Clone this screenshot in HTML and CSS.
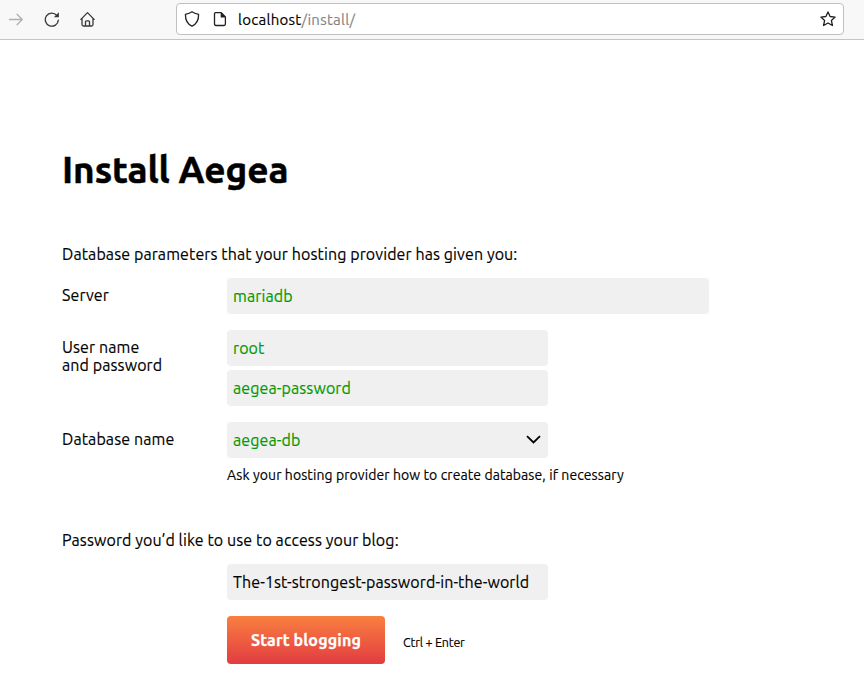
FILE: index.html
```html
<!DOCTYPE html>
<html lang="en">
<head>
<meta charset="utf-8">
<title>Install Aegea</title>
<link rel="stylesheet" href="styles.css">
</head>
<body>
<header class="toolbar">
  <nav class="nav">
    <svg class="icon forward" viewBox="0 0 16 16"><path d="M1.500 8.500h12.700M9 3.200l5.300 5.300L9 13.800"/></svg>
    <svg class="icon" viewBox="0 0 16 16"><path d="M14.300 9.100A6.500 6.500 0 1 1 12.800 4.500"/><path class="solid" d="M14.900 1.300v5H9.900z"/></svg>
    <svg class="icon" viewBox="0 0 16 16"><path d="M.9 8.400 7.500 1.600l6.600 6.800M2 7.300v6.200q0 1.500 1.500 1.500h8q1.500 0 1.500-1.500V7.300M5.500 14.800v-4q0-1 1-1h2q1 0 1 1v4"/></svg>
  </nav>
  <div class="address">
    <svg class="icon" viewBox="0 0 16 16"><path d="M8 .8c2 1.400 4 2 6.600 2.500C14.700 9 12.500 13.200 8 15.200 3.500 13.200 1.300 9 1.400 3.300 4 2.800 6 2.200 8 .8z"/></svg>
    <svg class="icon page" viewBox="0 0 16 16"><path d="M3.500 1.700h5.700l4.200 4.200v7.200q0 1.400-1.400 1.400H3.900q-1.400 0-1.400-1.400V2.700q0-1 1-1z"/><path class="fold" d="M8.700 1.700h.7l4 4v.7H8.700z"/></svg>
    <div class="url"><span class="host">localhost</span>/install/</div>
    <svg class="icon star" viewBox="0 0 16 16"><path d="m8 .9 2.100 4.600 5 .6-3.700 3.400 1 5L8 12l-4.400 2.500 1-5L.9 6.100l5-.6z"/></svg>
  </div>
</header>
<main class="page-body">
  <h1 class="title">Install Aegea</h1>
  <form class="form">
    <p class="lead">Database parameters that your hosting provider has given you:</p>
    <div class="row">
      <label class="label">Server</label>
      <div class="controls"><input class="field wide" value="mariadb"></div>
    </div>
    <div class="row">
      <label class="label">User name<br>and password</label>
      <div class="controls"><input class="field" value="root"><input class="field" value="aegea-password"></div>
    </div>
    <div class="row">
      <label class="label">Database name</label>
      <div class="controls">
        <div class="field select"><span>aegea-db</span><svg class="chevron" viewBox="0 0 15 10"><path d="m1 1.200 6.500 6.300L14 1.200"/></svg></div>
        <p class="hint">Ask your hosting provider how to create database, if necessary</p>
      </div>
    </div>
    <p class="lead lead-pass">Password you’d like to use to access your blog:</p>
    <div class="row">
      <span class="label"></span>
      <div class="controls"><input class="field strong" value="The-1st-strongest-password-in-the-world"></div>
    </div>
    <div class="row">
      <span class="label"></span>
      <div class="submit"><button class="button" type="button">Start blogging</button><span class="shortcut">Ctrl + Enter</span></div>
    </div>
  </form>
</main>
</body>
</html>
```
FILE: styles.css
```css
* { box-sizing: border-box; }
body {
  margin: 0;
  height: 691px;
  overflow: hidden;
  background: #fff;
  color: #000;
  font: 16px/18px Ubuntu, "Noto Sans", sans-serif;
  letter-spacing: .1px;
  -webkit-text-stroke: .15px;
}
p, h1 { margin: 0; white-space: nowrap; }

.toolbar {
  display: flex;
  height: 40px;
  padding: 3px 20px 4px 8px;
  background: #f8f8f8;
  border-bottom: 1px solid #c4c4c4;
}
.nav { display: flex; align-items: center; gap: 20px; width: 168px; }
.icon {
  flex: none;
  width: 16px;
  height: 16px;
  fill: none;
  stroke: #38383b;
  stroke-width: 1.3;
  stroke-linecap: round;
  stroke-linejoin: round;
}
.forward { stroke: #b0b0b0; }
.solid { fill: #38383b; stroke: none; }
.fold { fill: #202024; stroke: none; }
.address {
  display: flex;
  align-items: center;
  flex: 1;
  height: 32px;
  padding: 0 7px;
  background: #fff;
  border: 1px solid #c0c0c0;
  border-radius: 4px;
}
.address .icon { stroke: #202024; }
.address .fold { stroke: none; }
.page { margin-left: 12px; }
.url { flex: 1; margin-left: 10px; padding-top: 1px; color: #858585; font-size: 15px; letter-spacing: .28px; }
.host { color: #000; }

.page-body { padding: 108px 0 0 62px; }
.title { font-size: 37px; line-height: 44px; font-weight: 700; letter-spacing: -.05px; -webkit-text-stroke: .5px; }
.form { padding-top: 53px; }
.lead { height: 33px; }
.row { display: flex; margin-bottom: 16px; }
.label { width: 165px; flex: none; padding-top: 8px; }
.controls { display: flex; flex-direction: column; gap: 4px; }
.field {
  width: 321px;
  height: 36px;
  padding: 0 6px;
  border: 0;
  border-radius: 4px;
  background: #f0f0f0;
  color: #090;
  font: inherit;
  letter-spacing: inherit;
}
.wide { width: 482px; }
.strong { color: #000; }
.select { display: flex; align-items: center; justify-content: space-between; }
.chevron { width: 15px; height: 10px; margin-right: 1px; fill: none; stroke: #000; stroke-width: 1.8; }
.hint { padding-top: 4px; font-size: 14px; letter-spacing: .085px; }
.lead-pass { padding-top: 31px; height: 64px; }
.submit { display: flex; align-items: center; gap: 18px; }
.button {
  width: 158px;
  height: 48px;
  padding: 0;
  border: 0;
  border-radius: 4px;
  background: linear-gradient(#f98040, #e23c40);
  color: #fff;
  font: inherit;
  font-weight: 700;
  letter-spacing: .15px;
  -webkit-text-stroke: .25px;
}
.shortcut { font-size: 12.5px; padding-top: 3px; letter-spacing: -.2px; }
```
